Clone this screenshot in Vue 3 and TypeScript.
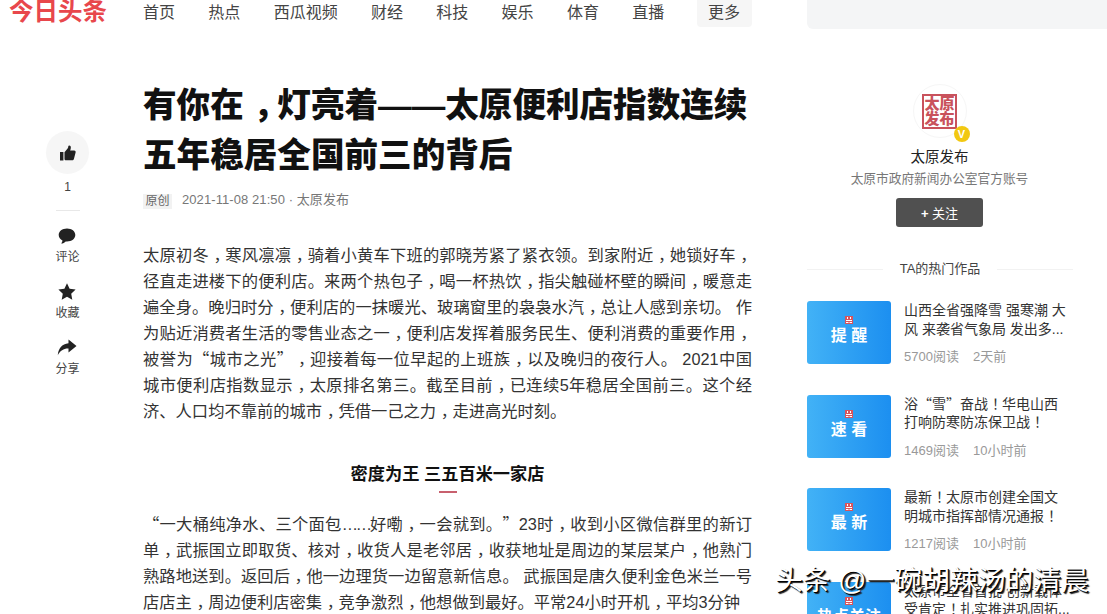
<script setup lang="ts">
interface Seg { t: string; c: string }

const navItems: string[] = ['首页', '热点', '西瓜视频', '财经', '科技', '娱乐', '体育', '直播']

const hotItems = [
  { tag: '提 醒', title: '山西全省强降雪 强寒潮 大风 来袭省气象局 发出多...', reads: '5700阅读', time: '2天前' },
  { tag: '速 看', title: '浴“雪”奋战！华电山西打响防寒防冻保卫战！', reads: '1469阅读', time: '10小时前' },
  { tag: '最 新', title: '最新！太原市创建全国文明城市指挥部情况通报！', reads: '1217阅读', time: '10小时前' },
  { tag: '热点关注', title: '太原市全省首批 创新载体受肯定！扎实推进巩固拓...', reads: '980阅读', time: '1天前' },
]

const headline = '有你在，灯亮着——太原便利店指数连续五年稳居全国前三的背后'
const paraOne = '太原初冬，寒风凛凛，骑着小黄车下班的郭晓芳紧了紧衣领。到家附近，她锁好车，径直走进楼下的便利店。来两个热包子，喝一杯热饮，指尖触碰杯壁的瞬间，暖意走遍全身。晚归时分，便利店的一抹暖光、玻璃窗里的袅袅水汽，总让人感到亲切。 作为贴近消费者生活的零售业态之一，便利店发挥着服务民生、便利消费的重要作用，被誉为“城市之光”，迎接着每一位早起的上班族，以及晚归的夜行人。 2021中国城市便利店指数显示，太原排名第三。截至目前，已连续5年稳居全国前三。这个经济、人口均不靠前的城市，凭借一己之力，走进高光时刻。'
const paraTwo = '“一大桶纯净水、三个面包……好嘞，一会就到。”23时，收到小区微信群里的新订单，武振国立即取货、核对，收货人是老邻居，收获地址是周边的某层某户，他熟门熟路地送到。返回后，他一边理货一边留意新信息。 武振国是唐久便利金色米兰一号店店主，周边便利店密集，竞争激烈，他想做到最好。平常24小时开机，平均3分钟'

// Full-width punctuation: commas sit centred in their cell, quotes use the CJK face.
function seg(text: string): Seg[] {
  return text
    .split(/([，！]|[“”]|…+)/)
    .filter((s) => s.length > 0)
    .map((s) => ({
      t: s,
      c: /^[，！]$/.test(s) ? 'pu' : /^[“”]$/.test(s) ? 'cj' : /^…+$/.test(s) ? 'el' : '',
    }))
}
</script>

<template>
  <div class="page">
    <aside class="left">
      <div class="logo">今日头条</div>
      <div class="rail">
        <button class="like" type="button" aria-label="点赞">
          <svg width="18" height="18" viewBox="0 0 18 18">
            <path fill="#222" d="M1 8h3.400v8.400H1zM5.500 8.200 8.600 4.600c.5-.7.7-1.500.7-2.400 0-.9 1.700-1.200 2.300.1.5 1.100.2 2.800-.5 4.300h4.100c1 0 1.700.9 1.400 1.900l-1.700 6.500c-.2.800-.9 1.300-1.700 1.300H7c-.9 0-1.500-.6-1.500-1.400z" />
          </svg>
        </button>
        <div class="count">1</div>
        <div class="rule"></div>
        <div class="action first">
          <svg width="18" height="16" viewBox="0 0 18 16">
            <path fill="#222" d="M9 .5c4.700 0 8.300 2.800 8.300 6.500 0 3.700-3.600 6.500-8.300 6.500l-1.300-.1c-1.100 1.100-2.600 1.900-4.500 2.200 .8-.9 1.200-1.900 1.300-3C2.300 11.500.7 9.400.7 7 .7 3.300 4.300.5 9 .5z" />
          </svg>
          <span>评论</span>
        </div>
        <div class="action">
          <svg width="18" height="17" viewBox="0 0 18 17">
            <path fill="#222" d="m9 .3 2.600 5.500 6 .8-4.400 4.100 1.100 6L9 13.800l-5.300 2.900 1.100-6L.4 6.600l6-.8z" />
          </svg>
          <span>收藏</span>
        </div>
        <div class="action">
          <svg width="20" height="17" viewBox="0 0 20 17">
            <path fill="#222" d="M11.500.5 19.500 7l-8 6.500V9.600C6.800 9.400 3.400 11.500.8 16.300 1.200 9.700 4.900 5 11.500 4.300z" />
          </svg>
          <span>分享</span>
        </div>
      </div>
    </aside>

    <main class="main">
      <nav class="nav">
        <a v-for="item in navItems" :key="item" class="nav-link">{{ item }}</a>
        <a class="nav-more">更多</a>
      </nav>

      <article class="article">
        <h1 class="title"><span v-for="(s, i) in seg(headline)" :key="i" :class="s.c">{{ s.t }}</span></h1>
        <div class="meta">
          <span class="badge">原创</span>
          <span class="stamp">2021-11-08 21:50 · 太原发布</span>
        </div>
        <p class="para lead"><span v-for="(s, i) in seg(paraOne)" :key="i" :class="s.c">{{ s.t }}</span></p>
        <h2 class="section">密度为王 三五百米一家店</h2>
        <div class="section-mark"></div>
        <p class="para"><span v-for="(s, i) in seg(paraTwo)" :key="i" :class="s.c">{{ s.t }}</span></p>
      </article>
    </main>

    <aside class="side">
      <div class="search"></div>
      <section class="author">
        <div class="avatar">
          <div class="seal">太原<br />发布</div>
          <span class="verified">V</span>
        </div>
        <div class="author-name">太原发布</div>
        <div class="author-desc">太原市政府新闻办公室官方账号</div>
        <button class="follow" type="button"><b>+</b> 关注</button>
      </section>
      <div class="hot-head"><span>TA的热门作品</span></div>
      <ul class="hot-list">
        <li v-for="item in hotItems" :key="item.title" class="hot-item">
          <div class="thumb">
            <svg class="thumb-icon" width="8" height="8" viewBox="0 0 8 8">
              <rect width="8" height="8" fill="#d9545c" />
              <path fill="#fff" d="M1 4h6v1H1zM1 6h2.500v1H1zM4.500 6H7v1H4.500zM2 1h1v2H2zM5 1h1v2H5z" />
            </svg>
            <strong>{{ item.tag }}</strong>
          </div>
          <div class="hot-body">
            <div class="hot-title"><span v-for="(s, i) in seg(item.title)" :key="i" :class="s.c">{{ s.t }}</span></div>
            <div class="hot-meta"><span>{{ item.reads }}</span><span>{{ item.time }}</span></div>
          </div>
        </li>
      </ul>
    </aside>

    <div class="watermark">头条 @一碗胡辣汤的清晨</div>
  </div>
</template>

<style>
html, body { margin: 0; background: #fff; overflow: hidden; }
</style>

<style scoped>
.page {
  position: relative;
  display: flex;
  width: 1107px;
  height: 614px;
  overflow: hidden;
  background: #fff;
  color: #222;
  font-family: "Liberation Sans", "Noto Sans CJK SC", sans-serif;
  text-spacing-trim: space-all;
}
.pu { padding-left: .28em; letter-spacing: -.28em; font-family: "Noto Sans CJK SC", sans-serif; line-height: 0; }
.cj { font-family: "Noto Sans CJK SC", sans-serif; line-height: 0; }
.el { letter-spacing: -.14em; line-height: 0; }
.left { width: 143px; flex: none; }
.logo {
  padding-left: 9px;
  height: 27px;
  font-size: 24.500px;
  line-height: 24px;
  font-weight: 700;
  color: #e8474c;
  white-space: nowrap;
}
.rail {
  width: 135px;
  margin-top: 104px;
  display: flex;
  flex-direction: column;
  align-items: center;
}
.like {
  width: 43px;
  height: 43px;
  padding: 0;
  border: 0;
  border-radius: 50%;
  background: #f6f6f6;
  display: flex;
  align-items: center;
  justify-content: center;
}
.count { margin-top: 6px; font-size: 12px; line-height: 14px; color: #444; }
.rule { width: 24px; height: 1px; margin-top: 16px; background: #e8e8e8; }
.action {
  margin-top: 18px;
  display: flex;
  flex-direction: column;
  align-items: center;
  font-size: 12px;
  line-height: 16px;
  color: #444;
}
.action svg { display: block; margin-bottom: 5px; }
.action.first { margin-top: 17px; }

.main { width: 609px; flex: none; }
.nav { display: flex; align-items: flex-start; height: 27px; }
.nav-link { margin-right: 33.300px; font-size: 16px; line-height: 25px; color: #444; white-space: nowrap; }
.nav-more {
  margin-left: -1px;
  flex: none;
  width: 55px;
  height: 27px;
  background: #f6f6f6;
  border-radius: 0 0 4px 4px;
  font-size: 16px;
  line-height: 25px;
  color: #444;
  text-align: center;
}
.article { padding-top: 54px; }
.title {
  margin: 0 -4px 0 0;
  font-size: 33.600px;
  line-height: 50px;
  font-weight: 900;
  color: #111;
}
.meta {
  margin-top: 11px;
  display: flex;
  align-items: center;
  gap: 10px;
  height: 18px;
  font-size: 13px;
  color: #777;
}
.stamp { line-height: 16px; margin-top: -2px; letter-spacing: .08px; }
.badge {
  width: 29px;
  height: 15px;
  background: #f2f2f2;
  font-size: 12px;
  line-height: 15px;
  text-align: center;
  color: #666;
}
.para {
  margin: 0;
  font-size: 16.300px;
  line-height: 26px;
  color: #333;
  text-align: justify;
}
.para.lead { margin-top: 32px; }
.section {
  margin: 37px 0 0;
  font-size: 17.200px;
  line-height: 26px;
  font-weight: 700;
  text-align: center;
  color: #111;
}
.section-mark { width: 18px; height: 2px; margin: 4px auto 18px; background: #c8606e; }

.side { margin-left: 55px; flex: 1; min-width: 0; }
.search {
  height: 29px;
  background: #f4f5f6;
  border-radius: 0 0 0 6px;
}
.author {
  width: 265px;
  margin-top: 55px;
  display: flex;
  flex-direction: column;
  align-items: center;
}
.avatar {
  position: relative;
  width: 54px;
  height: 54px;
  border: 1px solid #f6f6f6;
  border-radius: 50%;
  display: flex;
  align-items: center;
  justify-content: center;
  box-sizing: border-box;
}
.seal {
  width: 35px;
  height: 35px;
  box-sizing: border-box;
  border: 2px solid #c9525c;
  font-size: 15px;
  line-height: 15px;
  font-weight: 900;
  color: #c9525c;
  text-align: center;
  white-space: nowrap;
}
.verified {
  position: absolute;
  right: -4px;
  bottom: -5px;
  width: 16px;
  height: 16px;
  border-radius: 50%;
  background: #f2c811;
  color: #fff;
  font-size: 11px;
  line-height: 16px;
  font-weight: 700;
  text-align: center;
}
.author-name { margin-top: 9px; font-size: 14.500px; line-height: 20px; color: #222; }
.author-desc { margin-top: 2px; font-size: 12.700px; line-height: 20px; color: #777; }
.follow {
  margin-top: 9px;
  width: 87px;
  height: 29px;
  padding: 0;
  border: 0;
  border-radius: 3px;
  background: #505050;
  color: #fff;
  font-family: inherit;
  font-size: 13px;
}
.hot-head {
  margin-top: 32px;
  width: 266px;
  display: flex;
  align-items: center;
  gap: 17px;
  font-size: 13px;
  line-height: 20px;
  color: #444;
  white-space: nowrap;
}
.hot-head::before,
.hot-head::after { content: ""; flex: 1; height: 1px; background: #f2f2f2; }
.hot-list { list-style: none; margin: 22px 0 0; padding: 0; }
.hot-item { display: flex; gap: 13px; width: 266px; height: 63px; margin-bottom: 30.500px; }
.thumb {
  flex: none;
  width: 84px;
  height: 63px;
  padding-bottom: 2px;
  box-sizing: border-box;
  border-radius: 3px;
  background: linear-gradient(90deg, #42b2f6, #1c8ff0);
  display: flex;
  flex-direction: column;
  align-items: center;
  justify-content: center;
  color: #fff;
  font-size: 16px;
  line-height: 22px;
}
.thumb-icon { display: block; margin-bottom: 1px; }
.hot-body { width: 166px; flex: none; }
.hot-title {
  font-size: 14px;
  line-height: 18.500px;
  color: #333;
  height: 37px;
}
.hot-meta {
  margin-top: 10px;
  display: flex;
  gap: 14px;
  font-size: 13px;
  line-height: 18px;
  color: #999;
}
.watermark {
  position: absolute;
  left: 775px;
  top: 563px;
  font-size: 27.800px;
  line-height: 36px;
  color: #fff;
  white-space: nowrap;
  text-shadow: 1px 1px 0 #000, 2px 2px 1px #222;
}
</style>
